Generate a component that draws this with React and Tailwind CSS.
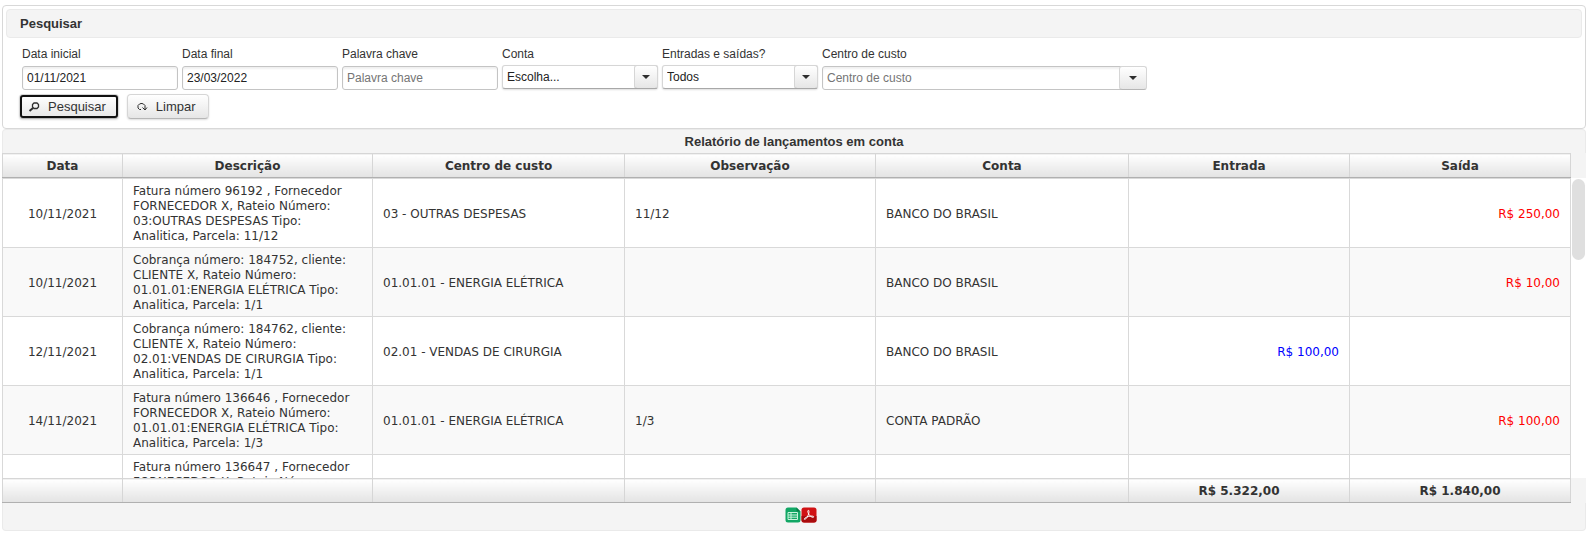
import React, { useState } from "react";

const columns = [
  { name: "Data", width: "w-[120px]", align: "px-[10px] text-center" },
  { name: "Descrição", width: "w-[250px]", align: "pr-5 pl-[10px] text-left" },
  { name: "Centro de custo", width: "w-[252px]", align: "px-[10px] text-left" },
  { name: "Observação", width: "w-[251px]", align: "px-[10px] text-left" },
  { name: "Conta", width: "w-[253px]", align: "px-[10px] text-left" },
  { name: "Entrada", width: "w-[221px]", align: "px-[10px] text-right text-[#0000ff]" },
  { name: "Saída", width: "w-[221px]", align: "px-[10px] text-right text-[#ff0000]" },
];

const lancamentos = [
  [
    "10/11/2021",
    "Fatura número 96192 , Fornecedor FORNECEDOR X, Rateio Número: 03:OUTRAS DESPESAS Tipo: Analitica, Parcela: 11/12",
    "03 - OUTRAS DESPESAS",
    "11/12",
    "BANCO DO BRASIL",
    "",
    "R$ 250,00",
  ],
  [
    "10/11/2021",
    "Cobrança número: 184752, cliente: CLIENTE X, Rateio Número: 01.01.01:ENERGIA ELÉTRICA Tipo: Analitica, Parcela: 1/1",
    "01.01.01 - ENERGIA ELÉTRICA",
    "",
    "BANCO DO BRASIL",
    "",
    "R$ 10,00",
  ],
  [
    "12/11/2021",
    "Cobrança número: 184762, cliente: CLIENTE X, Rateio Número: 02.01:VENDAS DE CIRURGIA Tipo: Analitica, Parcela: 1/1",
    "02.01 - VENDAS DE CIRURGIA",
    "",
    "BANCO DO BRASIL",
    "R$ 100,00",
    "",
  ],
  [
    "14/11/2021",
    "Fatura número 136646 , Fornecedor FORNECEDOR X, Rateio Número: 01.01.01:ENERGIA ELÉTRICA Tipo: Analitica, Parcela: 1/3",
    "01.01.01 - ENERGIA ELÉTRICA",
    "1/3",
    "CONTA PADRÃO",
    "",
    "R$ 100,00",
  ],
  // A última linha visível fica cortada pela área de rolagem
  ["", "Fatura número 136647 , Fornecedor FORNECEDOR X, Rateio Número:", "", "", "", "", ""],
];

const totais = ["", "", "", "", "", "R$ 5.322,00", "R$ 1.840,00"];

const inputClass =
  "h-6 w-full rounded-[3px] border border-[#c4c4c4] bg-white px-1 text-xs text-[#222222] shadow-[inset_0_2px_2px_#f0f0f0] placeholder:text-[#757575] outline-none";
const buttonClass =
  "flex h-[25px] items-center gap-2 rounded-[4px] border border-[#d6d6d6] border-b-[#b6b6b6] bg-linear-to-b from-white to-[#e6e6e6] pr-3 pl-2 text-[13px] shadow-[0_1px_2px_#dddddd]";
const barCellClass =
  "h-6 border border-[#d6d6d6] border-b-[#b0b0b0] bg-linear-to-b from-white to-[#e3e3e3] px-2 pt-[2px] text-center font-bold leading-[15px]";

const Arrow = () => (
  <svg viewBox="0 0 8 4" className="h-1 w-2 fill-[#2e2e2e]" aria-hidden="true">
    <path d="M0 0h8L4 4z" />
  </svg>
);

const Field = ({ id, label, className, children }) => (
  <div className={`flex flex-col ${className}`}>
    <label htmlFor={id} className="text-xs leading-4">
      {label}
    </label>
    {children}
  </div>
);

const SelectField = ({ id, label, options }) => (
  <Field id={id} label={label} className="w-[156px] gap-[3px]">
    <div className="relative h-6">
      <select
        id={id}
        className="block h-6 w-full appearance-none rounded-[3px] border border-[#d6d6d6] border-b-[#a8a8a8] bg-white pr-6 pl-1 text-xs text-[#222222] shadow-[0_1px_2px_#dddddd] outline-none"
      >
        {options.map((option) => (
          <option key={option}>{option}</option>
        ))}
      </select>
      <span className="pointer-events-none absolute inset-y-0 right-0 flex w-6 items-center justify-center rounded-[3px] border border-[#d6d6d6] border-b-[#a8a8a8] bg-linear-to-b from-white to-[#e6e6e6]">
        <Arrow />
      </span>
    </div>
  </Field>
);

const Columns = () => (
  <colgroup>
    {columns.map((column) => (
      <col key={column.name} className={column.width} />
    ))}
  </colgroup>
);

const tableClass = "w-full table-fixed border-collapse";

// --- Formulário de pesquisa ---
const SearchPanel = () => {
  const [inicio, setInicio] = useState("01/11/2021");
  const [fim, setFim] = useState("23/03/2022");

  return (
    <section className="rounded-[4px] border border-[#d8d8d8] p-[3px]">
      <h2 className="rounded-[4px] border border-[#eaeaea] bg-[#f4f4f4] px-[13px] py-1 text-[13px] leading-[19px] font-bold">
        Pesquisar
      </h2>
      <form className="px-4 pt-2 pb-[6px]" onSubmit={(event) => event.preventDefault()}>
        <div className="flex flex-wrap gap-1">
          <Field id="inicio" label="Data inicial" className="w-[156px] gap-1">
            <input id="inicio" className={inputClass} value={inicio} onChange={(event) => setInicio(event.target.value)} />
          </Field>
          <Field id="fim" label="Data final" className="w-[156px] gap-1">
            <input id="fim" className={inputClass} value={fim} onChange={(event) => setFim(event.target.value)} />
          </Field>
          <Field id="palavra" label="Palavra chave" className="w-[156px] gap-1">
            <input id="palavra" className={inputClass} placeholder="Palavra chave" />
          </Field>
          <SelectField id="conta" label="Conta" options={["Escolha..."]} />
          <SelectField id="tipo" label="Entradas e saídas?" options={["Todos", "Entradas", "Saídas"]} />
          <Field id="centro" label="Centro de custo" className="w-[325px] gap-1">
            <div className="flex">
              <input id="centro" className={inputClass} placeholder="Centro de custo" />
              <button
                type="button"
                aria-label="Centro de custo"
                className="-ml-1 flex h-6 w-7 shrink-0 items-center justify-center rounded-[3px] border border-[#d6d6d6] border-b-[#b6b6b6] bg-linear-to-b from-white to-[#e6e6e6]"
              >
                <Arrow />
              </button>
            </div>
          </Field>
        </div>
        <div className="-ml-[3px] flex gap-2 pt-1">
          <button
            type="submit"
            className={`${buttonClass} outline-2 -outline-offset-3 outline-[#101010]`}
          >
            <svg viewBox="0 0 12 12" className="h-3 w-3" fill="none" stroke="#2e2e2e" aria-hidden="true">
              <path d="M6 2h3l1.500 1.500V6L9 7.500H6L4.500 6V3.500z" strokeWidth="1.300" />
              <path d="M5 7L1.500 10" strokeWidth="2" />
            </svg>
            Pesquisar
          </button>
          <button type="reset" className={buttonClass}>
            <svg viewBox="0 0 12 12" className="h-3 w-3" fill="none" stroke="#2e2e2e" aria-hidden="true">
              <path d="M5 8.500H3.500L2 7V4.500L3.500 3 5 2.500h1L7.500 3 9 4.500V9" />
              <path d="M6.500 6.500L9 9l2-2.500" />
            </svg>
            Limpar
          </button>
        </div>
      </form>
    </section>
  );
};

// --- Tabela do relatório ---
const Report = () => (
  <section>
    <h2 className="rounded-t-[4px] border-x border-t border-[#eaeaea] bg-[#f4f4f4] py-[3px] text-center text-[13px] leading-[17px] font-bold">
      Relatório de lançamentos em conta
    </h2>
    <div className="font-['DejaVu_Sans',sans-serif] text-xs">
      <div className="bg-[#f4f4f4] pr-[15px]">
        <table className={tableClass}>
          <Columns />
          <thead>
            <tr>
              {columns.map((column) => (
                <th key={column.name} scope="col" className={barCellClass}>
                  {column.name}
                </th>
              ))}
            </tr>
          </thead>
        </table>
      </div>

      <div className="flex h-[300px] overflow-hidden">
        <div className="min-w-0 flex-1">
          <table className={tableClass}>
            <Columns />
            <tbody>
              {lancamentos.map((linha, index) => (
                <tr key={index} className="even:bg-[#f9f9f9]">
                  {linha.map((valor, i) => (
                    <td
                      key={columns[i].name}
                      className={`border border-[#d9d9d9] pt-[5px] pb-[3px] leading-[15px] ${columns[i].align}`}
                    >
                      {valor}
                    </td>
                  ))}
                </tr>
              ))}
            </tbody>
          </table>
        </div>
        <div className="w-[15px] px-px pt-px">
          <div className="h-[81px] rounded-full bg-[#dfdfdf]"></div>
        </div>
      </div>

      <div className="bg-[#f4f4f4] pr-[15px]">
        <table className={tableClass}>
          <Columns />
          <tfoot>
            <tr>
              {totais.map((total, i) => (
                <td key={columns[i].name} className={barCellClass}>
                  {total}
                </td>
              ))}
            </tr>
          </tfoot>
        </table>
      </div>
    </div>

    {/* Exportar */}
    <div className="flex h-7 items-center justify-center rounded-b-[4px] border-x border-b border-[#eaeaea] bg-[#f4f4f4] pb-1 pl-[14px]">
      <a href="#planilha" aria-label="Exportar planilha">
        <svg viewBox="0 0 16 16" className="h-4 w-4">
          <path d="M3 0.500h8.500L15.500 4.500V13a2.500 2.500 0 0 1-2.500 2.500H3A2.500 2.500 0 0 1 .5 13V3A2.500 2.500 0 0 1 3 .5z" fill="#12a765" />
          <path d="M11.500.5v4h4z" fill="#087d48" />
          <path d="M3 5.500h9.500v7H3zM3 8h9.500M3 10.200h9.500M6 5.500v7" fill="none" stroke="#c9f3dc" />
        </svg>
      </a>
      <a href="#pdf" aria-label="Exportar PDF">
        <svg viewBox="0 0 16 16" className="h-4 w-4">
          <rect x="0.500" y="0.500" width="15" height="15" rx="2.500" fill="#d01214" />
          <path d="M.5 9h15v4a2.500 2.500 0 0 1-2.500 2.500H3A2.500 2.500 0 0 1 .5 13z" fill="#a90b0d" />
          <path
            d="M7 3.500c1.200-.8 1.200 1.500.6 3.500-.7 2.300-2.500 5.300-3.900 5.400-1.500-.1.800-2.400 4-3 2.700-.6 5.300-.3 5.100.5-.3 1-2.900.1-4.300-1.600C7.200 6.800 6.400 4.100 7 3.500z"
            fill="none"
            stroke="#ffffff"
          />
        </svg>
      </a>
    </div>
  </section>
);

const App = () => (
  <main className="bg-white pt-[5px] pr-[5px] pl-[2px] font-['Liberation_Sans',sans-serif] text-[#333333]">
    <SearchPanel />
    <Report />
  </main>
);

export default App;
